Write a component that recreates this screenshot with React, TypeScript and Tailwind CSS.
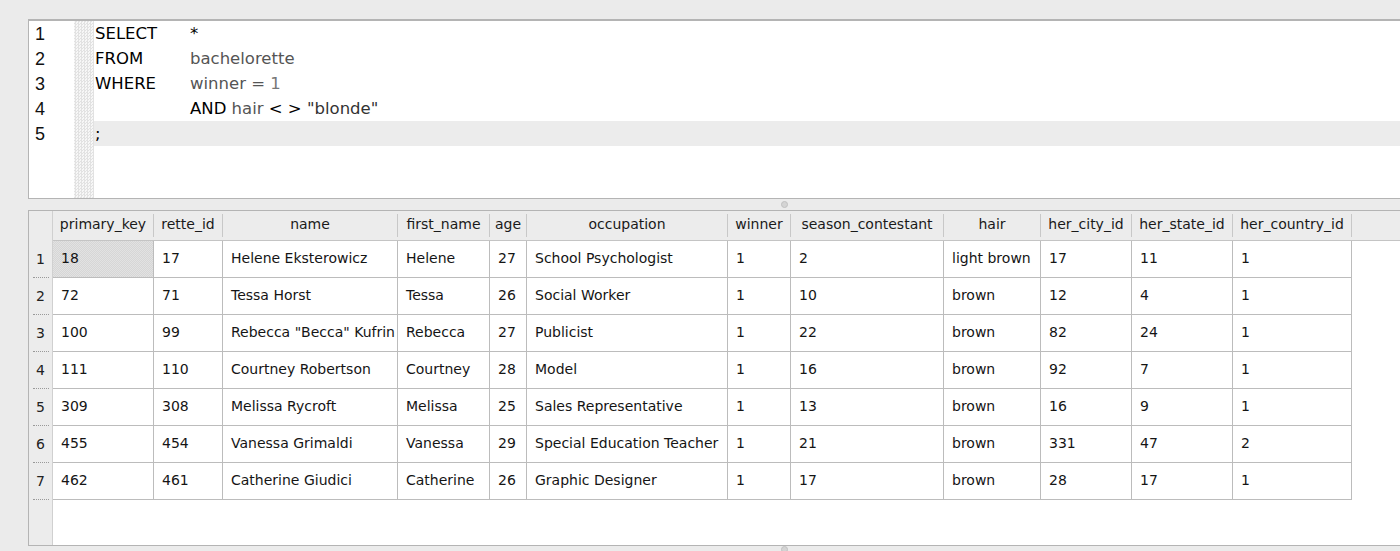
import React from 'react'

const cols = [
  { key: 'primary_key', w: 101 },
  { key: 'rette_id', w: 69 },
  { key: 'name', w: 175 },
  { key: 'first_name', w: 92 },
  { key: 'age', w: 37 },
  { key: 'occupation', w: 201 },
  { key: 'winner', w: 63 },
  { key: 'season_contestant', w: 153 },
  { key: 'hair', w: 97 },
  { key: 'her_city_id', w: 91 },
  { key: 'her_state_id', w: 101 },
  { key: 'her_country_id', w: 119 },
]

const rows = [
  ['18', '17', 'Helene Eksterowicz', 'Helene', '27', 'School Psychologist', '1', '2', 'light brown', '17', '11', '1'],
  ['72', '71', 'Tessa Horst', 'Tessa', '26', 'Social Worker', '1', '10', 'brown', '12', '4', '1'],
  ['100', '99', 'Rebecca "Becca" Kufrin', 'Rebecca', '27', 'Publicist', '1', '22', 'brown', '82', '24', '1'],
  ['111', '110', 'Courtney Robertson', 'Courtney', '28', 'Model', '1', '16', 'brown', '92', '7', '1'],
  ['309', '308', 'Melissa Rycroft', 'Melissa', '25', 'Sales Representative', '1', '13', 'brown', '16', '9', '1'],
  ['455', '454', 'Vanessa Grimaldi', 'Vanessa', '29', 'Special Education Teacher', '1', '21', 'brown', '331', '47', '2'],
  ['462', '461', 'Catherine Giudici', 'Catherine', '26', 'Graphic Designer', '1', '17', 'brown', '28', '17', '1'],
]

const font = { fontFamily: '"DejaVu Sans", "Noto Sans", sans-serif' }

function Editor() {
  const lines = [
    <><span className="inline-block w-[95px] text-black">SELECT</span><span className="text-black">*</span></>,
    <><span className="inline-block w-[95px] text-black">FROM</span><span className="text-[#555]">bachelorette</span></>,
    <><span className="inline-block w-[95px] text-black">WHERE</span><span className="text-[#555]">winner = </span><span className="text-[#777]">1</span></>,
    <><span className="inline-block w-[95px]"></span><span className="text-black">AND </span><span className="text-[#555]">hair </span><span className="text-black">&lt; &gt; </span><span className="text-[#333]">"blonde"</span></>,
    <><span className="text-black">;</span></>,
  ]
  return (
    <div className="flex h-[180px] border-t-2 border-l border-b border-[#b4b4b4] bg-white">
      <div className="w-[45px] pt-[1px] text-[18px] leading-[25px] text-[#111] font-['Liberation_Sans',sans-serif]">
        {[1, 2, 3, 4, 5].map((n) => (
          <div key={n} className="pl-[6px]">{n}</div>
        ))}
      </div>
      <div className="w-[20px] bg-[repeating-conic-gradient(#e2e2e2_0_25%,#f7f7f7_0_50%)] bg-[length:3px_3px]" />
      <div className="flex-1 pt-[0px] text-[16.5px] leading-[25px]" style={font}>
        {lines.map((l, i) => (
          <div key={i} className={i === 4 ? 'pl-[1px] bg-[#ececec]' : 'pl-[1px]'}>
            {l}
          </div>
        ))}
      </div>
    </div>
  )
}

function ResultTable() {
  return (
    <div className="flex h-[336px] border-t border-l border-b border-[#b4b4b4] bg-white text-[14px] text-[#151515]" style={font}>
      <div className="w-[24px] shrink-0 bg-[#ececec] border-r border-[#d0d0d0]">
        <div className="h-[30px]" />
        {rows.map((_, i) => (
          <div key={i} className="h-[37px] flex flex-col items-center">
            <div className="flex-1 flex items-center text-[14px] text-[#222]">{i + 1}</div>
            <div className="w-[16px] border-b border-dotted border-[#999]" />
          </div>
        ))}
      </div>
      <div className="flex-1 flex flex-col">
        <div className="flex h-[30px] bg-[#ececec] border-b border-[#c4c4c4]">
          {cols.map((c) => (
            <div
              key={c.key}
              style={{ width: c.w }}
              className="shrink-0 flex items-center justify-center border-r border-[#c8c8c8] my-[3px] pb-[3px] text-[14px] text-[#1a1a1a]"
            >
              {c.key}
            </div>
          ))}
        </div>
        {rows.map((r, ri) => (
          <div key={ri} className="flex">
            {r.map((v, ci) => (
              <div
                key={ci}
                style={{ width: cols[ci].w }}
                className={
                  'shrink-0 h-[37px] flex items-center pl-[8px] pb-[2px] border-r border-b border-[#bcbcbc] whitespace-nowrap overflow-hidden ' +
                  (ri === 0 && ci === 0 ? 'bg-[repeating-conic-gradient(#d6d6d6_0_25%,#e2e2e2_0_50%)] bg-[length:2px_2px]' : '')
                }
              >
                {v}
              </div>
            ))}
          </div>
        ))}
      </div>
    </div>
  )
}

export default function App() {
  return (
    <div className="w-[1400px] h-[551px] overflow-hidden bg-[#ebebeb] pt-[19px] pl-[28px]">
      <Editor />
      <div className="h-[11px] flex items-center justify-center pr-[28px]">
        <div className="w-[7px] h-[7px] rounded-full bg-[#d4d4d4] border border-[#c0c0c0] ml-[168px]" />
      </div>
      <ResultTable />
      <div className="h-[5px] flex justify-center">
        <div className="w-[7px] h-[7px] rounded-full bg-[#d4d4d4] border border-[#c0c0c0] ml-[140px]" />
      </div>
    </div>
  )
}
